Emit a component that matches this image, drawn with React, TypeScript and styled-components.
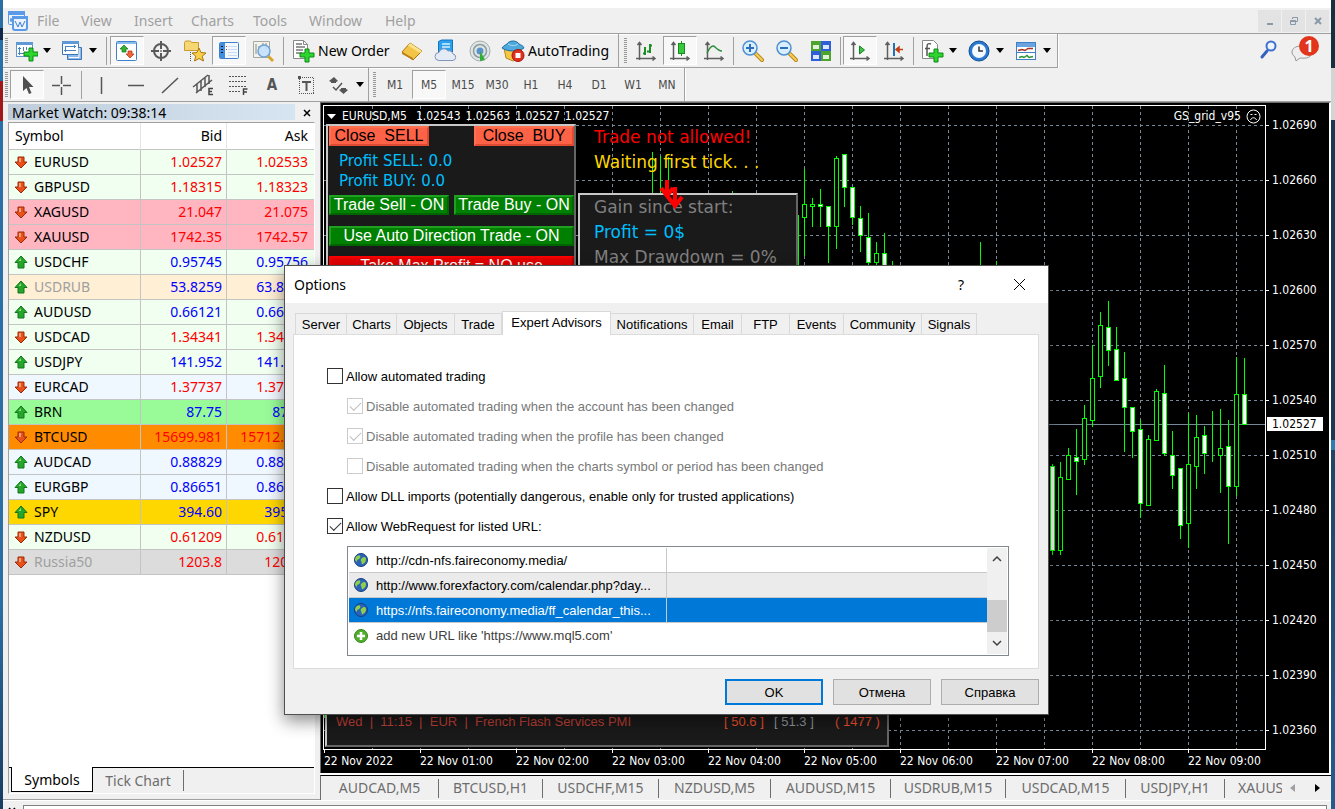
import React from "react";
import styled, { createGlobalStyle, css } from "styled-components";

const ui = `"Noto Sans", "Open Sans", sans-serif`;
const dlg = `"Liberation Sans", Arial, sans-serif`;
const tahoma = `"DejaVu Sans Condensed", "DejaVu Sans", sans-serif`;
const verdana = `"DejaVu Sans", sans-serif`;

const Global = createGlobalStyle`
  * { box-sizing: border-box; }
  body { margin: 0; background: #f0f0f0; font-family: ${ui}; font-size: 14px; color: #000; }
  button { font: inherit; color: inherit; background: none; border: 0; padding: 0; margin: 0; cursor: default; }
  svg { display: block; flex: none; }
`;

/* ---------- window shell ---------- */
const Desktop = styled.div`
  position: relative;
  display: flex;
  height: 100vh;
  min-height: 640px;
  overflow: hidden;
  padding: 0 4px 0 3px;
  background:
    linear-gradient(#16303f 0 68px, #d4d4d4 68px 120px, #1a3a50 120px 440px, #2a7fae 440px 450px, #1d4664 450px, #245c8e) right / 4px 100% no-repeat,
    linear-gradient(#2b6ea3 0 28px, #10294a 28px 40px, #2a70a8 40px 81px, #a01818 81px 121px, #2a70a8 121px, #2b6ea3 75%, #1a3c60);
`;
const Frame = styled.div`
  flex: 1;
  min-width: 0;
  display: flex;
  flex-direction: column;
  background: #f0f0f0;
  border-top: 8px solid #fff;
`;
const MenuBar = styled.nav`
  display: flex;
  align-items: center;
  height: 26px;
  padding: 0 2px 0 4px;
  border-bottom: 1px solid #a0a0a0;
`;
const MenuItem = styled.button<{ $w: number }>`
  width: ${(p) => p.$w}px;
  text-align: left;
  color: #a0a0a0;
  line-height: 24px;
`;
const Spacer = styled.div`flex: 1;`;
const WinBtn = styled.button`
  width: 23px;
  height: 22px;
  margin-left: 1px;
  display: flex;
  align-items: center;
  justify-content: center;
  background: #e3e3e3;
`;
const BarRow = styled.div<{ $h: number }>`
  display: flex;
  height: ${(p) => p.$h}px;
  align-items: stretch;
`;
const Bar = styled.div<{ $line?: boolean }>`
  display: flex;
  align-items: center;
  border-right: 1px solid #a0a0a0;
  border-bottom: ${(p) => (p.$line ? "1px solid #a0a0a0" : "0")};
  box-shadow: inset 0 1px #fff, 1px 0 #fff;
`;
const Grip = styled.div`
  width: 7px;
  height: 26px;
  padding: 0 2px;
  background: repeating-linear-gradient(#989898 0 1px, #f0f0f0 1px 2px) content-box;
`;
const Tool = styled.button<{ $on?: boolean; $w?: number; $drop?: boolean }>`
  width: ${(p) => p.$w ?? 34}px;
  height: 29px;
  display: flex;
  align-items: center;
  justify-content: ${(p) => (p.$w ? "flex-start" : "center")};
  gap: ${(p) => (p.$drop ? 5 : 3)}px;
  padding-left: ${(p) => (p.$w ? 4 : 0)}px;
  white-space: nowrap;
  ${(p) =>
    p.$on &&
    css`
      background: #f8f8f8;
      border: 1px solid #fff;
      border-top-color: #a0a0a0;
      border-left-color: #a0a0a0;
    `}
`;
const Period = styled(Tool)`
  font-family: ${tahoma};
  font-size: 12px;
  color: #4a4a4a;
`;
const Sep = styled.div<{ $w?: number; $full?: boolean }>`
  width: ${(p) => p.$w ?? 7}px;
  height: ${(p) => (p.$full ? 34 : 28)}px;
  background: linear-gradient(#a0a0a0, #a0a0a0) center / 1px 100% no-repeat;
`;
const Main = styled.div`
  flex: 1;
  min-height: 0;
  display: flex;
  border-top: 1px solid #a0a0a0;
`;

/* ---------- market watch ---------- */
const Watch = styled.aside`
  width: 317px;
  flex: none;
  display: flex;
  flex-direction: column;
  padding: 2px 5px 5px 5px;
  border-bottom: 1px solid #a0a0a0;
`;
const WatchHead = styled.header`
  display: flex;
  height: 18px;
  line-height: 17px;
  justify-content: space-between;
`;
const WatchTitle = styled.h2`
  margin: 0 0 2px;
  padding-left: 4px;
  width: 287px;
  font-size: 14px;
  font-weight: 400;
  background: linear-gradient(90deg, #bfcddb, #d7e4f2);
`;
const CloseBtn = styled.button`
  width: 17px;
  display: flex;
  align-items: center;
  justify-content: center;
`;
const WatchBody = styled.div`
  flex: 1;
  min-height: 0;
  overflow: hidden;
  background: #fff;
  border: 1px solid #a0a0a0;
  border-right-color: #fff;
  border-bottom: 0;
`;
const Quotes = styled.table`
  width: 100%;
  table-layout: fixed;
  border-collapse: separate;
  border-spacing: 0;
  th, td {
    height: 25px;
    padding: 0 4px;
    font-weight: 400;
    text-align: right;
    line-height: 24px;
    border-bottom: 1px solid #c4c4c4;
    border-right: 1px solid #c4c4c4;
  }
  th { height: 27px; line-height: 26px; border-right-color: #e5e5e5; }
  th:first-child { text-align: left; padding-left: 6px; }
  th:last-child, td:last-child { border-right: 0; padding-right: 6px; }
`;
const QuoteRow = styled.tr<{ $bg: string; $c: string; $dim?: boolean }>`
  background: ${(p) => p.$bg};
  color: ${(p) => p.$c};
  td:first-child { color: ${(p) => (p.$dim ? "#a0a0a0" : "#000")}; }
`;
const Sym = styled.span`
  display: flex;
  align-items: center;
  gap: 5px;
`;
const WatchTabs = styled.div`
  display: flex;
  height: 27px;
  align-items: flex-start;
  border-left: 1px solid #a0a0a0;
  border-right: 1px solid #fff;
  border-bottom: 1px solid #fff;
  padding-left: 2px;
  box-shadow: inset 0 1px #000;
`;
const WatchTab = styled.button<{ $on?: boolean }>`
  height: ${(p) => (p.$on ? 25 : 21)}px;
  width: ${(p) => (p.$on ? 82 : 91)}px;
  margin-top: ${(p) => (p.$on ? 0 : 3)}px;
  color: ${(p) => (p.$on ? "#000" : "#6d6d6d")};
  background: ${(p) => (p.$on ? "#fff" : "none")};
  border: solid ${(p) => (p.$on ? "#000" : "#6d6d6d")};
  border-width: ${(p) => (p.$on ? "0 1px 1px 1px" : "0 1px 0 0")};
`;

/* ---------- chart ---------- */
const ChartSide = styled.section`
  flex: 1;
  min-width: 0;
  display: flex;
  flex-direction: column;
`;
const ChartWin = styled.div`
  flex: 1;
  min-height: 0;
  display: grid;
  grid-template-columns: minmax(0, 1fr) 63px;
  grid-template-rows: minmax(0, 1fr) 23px;
  padding: 2px 0 0 2px;
  border: 1px solid #6d6d6d;
  border-right: 2px solid #fff;
  border-bottom: 0;
  background: #000;
  color: #fff;
  font-family: ${tahoma};
  font-size: 12px;
`;
const Plot = styled.div`
  position: relative;
  overflow: hidden;
  border: 1px solid #fff;
`;
const PlotSvg = styled.svg`
  position: absolute;
  inset: 0;
`;
const PlotTitle = styled.div`
  position: relative;
  display: flex;
  align-items: center;
  height: 20px;
  padding: 0 4px 0 3px;
  gap: 5px;
  white-space: nowrap;
`;
const SymbolName = styled.span`
  padding: 0 4px 0 1px;
`;
const PriceAxis = styled.div`
  position: relative;
  display: flex;
  flex-direction: column;
  gap: 39px;
  padding-top: 12px;
  overflow: hidden;
`;
const Price = styled.div`
  flex: none;
  display: flex;
  align-items: center;
  gap: 3px;
  line-height: 16px;
  &::before { content: ""; width: 3px; height: 1px; background: #fff; }
`;
const PriceNow = styled.div`
  position: absolute;
  top: 312px;
  left: 1px;
  width: 56px;
  line-height: 14px;
  padding-left: 5px;
  background: #fff;
  color: #000;
`;
const TimeAxis = styled.div`
  display: flex;
  overflow: hidden;
  padding-left: 1px;
`;
const Time = styled.div`
  flex: none;
  width: 96px;
  line-height: 16px;
  white-space: nowrap;
  &::before { content: ""; display: block; width: 1px; height: 3px; background: #fff; }
`;
const Panel = styled.div<{ $x: number; $w: number }>`
  position: absolute;
  left: ${(p) => p.$x}px;
  width: ${(p) => p.$w}px;
  background: #1a1a1a;
  border: 2px solid;
  border-color: #c8c8c8 #666 #666 #c8c8c8;
`;
const TradePanel = styled(Panel)`
  top: 18px;
  height: 300px;
  padding: 0 0 0 1px;
  font-family: ${dlg};
  font-size: 16px;
`;
const PanelRow = styled.div<{ $gap: number }>`
  display: flex;
  justify-content: space-between;
  margin-bottom: ${(p) => p.$gap}px;
`;
const EaButton = styled.button<{ $tone: "tomato" | "green" | "red"; $w?: number }>`
  width: ${(p) => (p.$w ? `${p.$w}px` : "100%")};
  height: 20px;
  line-height: 16px;
  white-space: pre;
  text-align: center;
  border: 2px solid;
  ${(p) =>
    ({
      tomato: css`background: #ff6347; color: #000; border-color: #ff7050 #e04a30 #e04a30 #ff7050;`,
      green: css`background: #008000; color: #fff; border-color: #20a020 #006400 #006400 #20a020;`,
      red: css`background: #e80000; color: #fff; border-color: #ff0000 #b00000 #b00000 #ff0000;`,
    })[p.$tone]}
`;
const Profits = styled.div`
  padding: 5px 0 4px 10px;
  font-family: ${verdana};
  font-size: 15px;
  line-height: 20px;
  color: #00bfff;
  height: 49px;
`;
const Status = styled.div`
  position: absolute;
  left: 270px;
  top: 19px;
  font-family: ${verdana};
  font-size: 17px;
  line-height: 25px;
`;
const GainPanel = styled(Panel)`
  top: 87px;
  height: 220px;
  padding-left: 14px;
  font-family: ${verdana};
  font-size: 17px;
  line-height: 25px;
`;
const Line = styled.div<{ $c: string }>`
  color: ${(p) => p.$c};
  white-space: pre;
`;
const NewsPanel = styled(Panel)`
  bottom: 2px;
  height: 60px;
  display: flex;
  align-items: flex-end;
  padding: 0 7px 15px 9px;
  font-family: ${dlg};
  font-size: 13px;
  line-height: 16px;
  white-space: pre;
`;
const NewsCell = styled.span<{ $c: string; $w?: number }>`
  color: ${(p) => p.$c};
  ${(p) => (p.$w ? `width: ${p.$w}px;` : "flex: 1;")}
`;
const ChartTabs = styled.div`
  display: flex;
  align-items: center;
  height: 25px;
  overflow: hidden;
  border-top: 1px solid #000;
  border-left: 1px solid #6d6d6d;
  box-shadow: 0 -2px #fff;
  margin-top: 2px;
  position: relative;
`;
const ChartTab = styled.button<{ $w: number }>`
  flex: none;
  width: ${(p) => p.$w}px;
  height: 19px;
  line-height: 18px;
  color: #6d6d6d;
  overflow: hidden;
  white-space: nowrap;
  border-right: 1px solid #6d6d6d;
  &:last-of-type { border: 0; text-align: left; padding-left: 13px; }
`;
const Pager = styled.div`
  display: flex;
  gap: 20px;
  padding-left: 8px;
`;
const Terminal = styled.footer`
  height: 9px;
  flex: none;
  padding: 4px 4px 0 5px;
  display: flex;
  gap: 7px;
  align-items: stretch;
  border-top: 1px solid #fff;
`;
const TerminalBody = styled.div`
  flex: 1;
  background: #fff;
  border: 1px solid #808080;
  border-bottom: 0;
`;

/* ---------- dialog ---------- */
const Dialog = styled.div`
  position: absolute;
  left: 284px;
  top: 265px;
  width: 765px;
  border: 1px solid #505050;
  background: #f0f0f0;
  box-shadow: 0 6px 16px rgba(0, 0, 0, 0.45);
  font-family: ${dlg};
  font-size: 13px;
`;
const DlgTitle = styled.header`
  display: flex;
  align-items: center;
  height: 37px;
  padding-left: 9px;
  background: #fff;
  font-family: ${ui};
  font-size: 14px;
  h1 { flex: 1; margin: 0; font-size: 14px; font-weight: 400; }
`;
const TitleBtn = styled.button`
  width: 58px;
  display: flex;
  justify-content: center;
`;
const DlgBody = styled.div`
  padding: 8px 9px 0 8px;
`;
const Tabs = styled.div`
  display: flex;
  align-items: flex-end;
  padding-left: 2px;
`;
const Tab = styled.button<{ $w: number; $on?: boolean }>`
  width: ${(p) => p.$w}px;
  height: ${(p) => (p.$on ? 24 : 21)}px;
  padding-bottom: ${(p) => (p.$on ? 2 : 0)}px;
  margin-bottom: ${(p) => (p.$on ? -1 : 0)}px;
  position: relative;
  background: ${(p) => (p.$on ? "#fff" : "#f0f0f0")};
  border: 1px solid #d9d9d9;
  border-bottom: 0;
  border-left-width: ${(p) => (p.$on ? 1 : 0)}px;
  &:first-child { border-left-width: 1px; }
`;
const Page = styled.div`
  height: 335px;
  padding: 26px 29px 0 33px;
  background: #fff;
  border: 1px solid #dcdcdc;
`;
const Check = styled.label<{ $sub?: boolean; $off?: boolean }>`
  display: flex;
  align-items: center;
  gap: 3px;
  height: 30px;
  padding-left: ${(p) => (p.$sub ? 20 : 0)}px;
  color: ${(p) => (p.$off ? "#787878" : "#000")};
`;
const Box = styled.input`
  appearance: none;
  width: 16px;
  height: 16px;
  margin: 0;
  display: grid;
  place-items: center;
  border: 1px solid #333;
  background: #fff;
  color: #333;
  &:disabled { border-color: #ccc; color: #bfbfbf; }
  &:checked::after {
    content: "";
    width: 10px;
    height: 5px;
    border: solid currentColor;
    border-width: 0 0 1px 1px;
    transform: translateY(-1px) rotate(-45deg);
  }
`;
const ListBox = styled.div`
  display: flex;
  height: 110px;
  margin: 5px 0 0 20px;
  padding: 1px;
  border: 1px solid #828790;
`;
const Urls = styled.table`
  flex: 1;
  width: 100%;
  align-self: flex-start;
  table-layout: fixed;
  border-collapse: separate;
  border-spacing: 0;
  td {
    height: 25px;
    padding: 0 0 0 5px;
    line-height: 23px;
    border-bottom: 1px solid #c8c8c8;
    white-space: nowrap;
  }
  td:first-child:not([colspan]) { border-right: 1px solid #c8c8c8; }
  tr:last-child td { border: 0; }
`;
const UrlRow = styled.tr<{ $bg: string; $c: string }>`
  background: ${(p) => p.$bg};
  color: ${(p) => p.$c};
`;
const Url = styled.span`
  display: flex;
  align-items: center;
  gap: 8px;
`;
const Scroll = styled.div`
  width: 20px;
  display: flex;
  flex-direction: column;
  justify-content: space-between;
  background: #f0f0f0;
`;
const ScrollBtn = styled.button`
  height: 22px;
  display: flex;
  align-items: center;
  justify-content: center;
`;
const Thumb = styled.div`
  height: 33px;
  margin-top: 30px;
  background: #cdcdcd;
`;
const Actions = styled.div`
  display: flex;
  justify-content: flex-end;
  gap: 10px;
  padding: 10px 0 9px;
`;
const Push = styled.button<{ $main?: boolean }>`
  width: 98px;
  height: 26px;
  background: #e1e1e1;
  border: ${(p) => (p.$main ? "2px solid #0078d7" : "1px solid #adadad")};
`;

/* ---------- icons ---------- */
const I = ({ children, s = 24 }: { children?: React.ReactNode; s?: number }) => (
  <svg width={s} height={s} viewBox={`0 0 ${s} ${s}`} fill="none" aria-hidden="true">{children}</svg>
);
const Plus = () => (
  <path d="M14 10h4v4h5v4h-5v5h-4v-5h-5v-4h5z" fill="#2fd52f" stroke="#0b8a12" strokeWidth="1" />
);
const Arrow = () => (
  <svg width="8" height="5" viewBox="0 0 8 5"><path d="M0 0h8L4 5z" fill="#000" /></svg>
);
const NewChartIcon = () => (
  <I><rect x="2.500" y="3.500" width="16" height="14" fill="#fff" stroke="#5f96cf" /><path d="M2 3h17v3H2z" fill="#5f9ad6" /><path d="M5.500 8v8M4 14.500h8M4 9.500h3M9.500 8v4M12.500 8v3" stroke="#4b83bd" /><g transform="translate(1 -1)"><Plus /></g></I>
);
const WindowsIcon = () => (
  <I><path d="M7.500 8.500h14v12h-14z" fill="#8fb9e6" stroke="#3b76b8" /><path d="M2.500 2.500h16v13h-16z" fill="#fff" stroke="#3b76b8" /><path d="M2 2h17v3H2z" fill="#5f9ad6" /><path d="M5.500 7v6M4 11.500h12M5 7.500h11M14.500 6v3" stroke="#4b83bd" /><path d="M9 18.500h10V9" stroke="#fff" /></I>
);
const MarketIcon = () => (
  <I><rect x="1.500" y="2.500" width="20" height="19" rx="1" fill="#fff" stroke="#3f82cc" /><path d="M2 3h19v2H2z" fill="#8cbcec" /><path d="M9 6l4 4h-2v3H7v-3H5z" fill="#35b035" stroke="#0e7a16" strokeWidth=".7" /><path d="M15 19l-4-4h2v-3h4v3h2z" fill="#f2653a" stroke="#b02c0c" strokeWidth=".7" /></I>
);
const TargetIcon = () => (
  <I><circle cx="12" cy="12" r="7" stroke="#5a5a5a" strokeWidth="2" /><path d="M12 2v8M12 14v8M2 12h8M14 12h8" stroke="#5a5a5a" strokeWidth="2" /><circle cx="12" cy="12" r="1" fill="#777" /></I>
);
const star = "M16 9l2 4.500 5 .5-3.800 3.200L20.500 22 16 19.500 11.500 22l1.300-4.800L9 14l5-.5z";
const FolderIcon = () => (
  <I><path d="M1.500 3.500l1-1.500h5l1 1.500h7v8h-14z" fill="#f7d774" stroke="#c99a2c" /><path d="M7.500 13v9" stroke="#555" strokeDasharray="1 1" /><path d={star} fill="#f9cf4b" stroke="#a8780d" /></I>
);
const DataIcon = () => (
  <I><rect x="2.500" y="3.500" width="19" height="16" rx="1" fill="#f4f9ff" stroke="#3f82cc" /><path d="M3 4h5v15H3z" fill="#3f8fe0" /><path d="M4 7.500h2M4 10.500h2M4 13.500h2" stroke="#111" /><path d="M11 7.500h9M11 10.500h9M11 13.500h9M11 16.500h9" stroke="#c9dcf2" /><path d="M9 7.500h1M9 10.500h1" stroke="#d33" /></I>
);
const TesterIcon = () => (
  <I><path d="M2.500 2.500h16v16h-16z" fill="#f3f3ee" stroke="#a8a8a0" /><path d="M5 5v10M8 7v6M15 4v6M12 4v3" stroke="#8a8a80" /><path d="M17 17l5 5" stroke="#d8a52c" strokeWidth="3" /><circle cx="13" cy="12" r="6" fill="#c4e2fb" fillOpacity=".9" stroke="#6fa3d6" strokeWidth="1.500" /></I>
);
const OrderIcon = () => (
  <I><path d="M2.500 1.500h10l4 4v14h-14z" fill="#fff" stroke="#888" /><path d="M12.500 1.500v4h4" stroke="#888" /><path d="M5 5h6M5 8h9M5 11h7M5 14h6" stroke="#777" strokeWidth="1.500" /><Plus /></I>
);
const GoldIcon = () => (
  <I><path d="M2 13l8-9 12 8-9 9z" fill="#f3c445" stroke="#a87510" /><path d="M10 4l12 8-2 2L8 6.500z" fill="#fbe38c" /><path d="M2 13l11 6v2L2 15z" fill="#b97f15" /></I>
);
const CloudIcon = () => (
  <I><path d="M4.500 2.500l3-1.500h11v12h-14z" fill="#2da0ee" stroke="#1374c0" /><path d="M8 5h8M8 8h8" stroke="#d9f0ff" strokeWidth="1.500" /><path d="M5 21.500a4 4 0 0 1 0-8 5 5 0 0 1 9-1.500 4 4 0 0 1 5 3 3.300 3.300 0 0 1 0 6.500z" fill="#e4ebf5" stroke="#7f97bb" /></I>
);
const SignalIcon = () => (
  <I><circle cx="12" cy="12" r="10" fill="#dfe5e5" stroke="#a5adad" /><circle cx="12" cy="12" r="6.500" stroke="#8b9c9c" strokeWidth="1.500" /><circle cx="12" cy="12" r="3.500" fill="#5b92c9" /><path d="M12 12v10a10 10 0 0 0 5-1.500z" fill="#2fae35" /></I>
);
const AutoIcon = () => (
  <I><path d="M3 9h18l-2 10-7 3-7-3z" fill="#f5c744" stroke="#b6861a" /><path d="M1 9c2-3 4-3 5-4 2-4 10-4 12 0 1 1 4 1 5 4-6 4-16 4-22 0z" fill="#4fa9dd" stroke="#1f6fa3" /><path d="M7 5c3 2 8 2 10 0" stroke="#a9dcf7" /><circle cx="17" cy="16.500" r="6" fill="#e03020" stroke="#a51208" /><path d="M14.500 14h5v5h-5z" fill="#fff" /></I>
);
const Axes = () => <path d="M5.500 4v17M2 19.500h19M3.500 6l2-2.500 2 2.500M18.500 17.500l2.500 2-2.500 2" stroke="#5e5e5e" strokeWidth="1.500" />;
const BarsIcon = () => (<I><Axes /><path d="M11 8v8M9 14.500h2M16 5v9M16 6.500h2M13 12.500h3" stroke="#1b8f24" strokeWidth="2" /></I>);
const CandlesIcon = () => (<I><Axes /><path d="M13.500 2v15" stroke="#1b8f24" /><rect x="10.500" y="4.500" width="6" height="10" fill="#35c93c" stroke="#178a20" /></I>);
const LineIcon = () => (<I><Axes /><path d="M5 14c3-7 6-8 8-6 3 3 5 4 7 4" stroke="#2a8f38" strokeWidth="1.500" /></I>);
const ZoomIcon = ({ plus }: { plus?: boolean }) => (
  <I><path d="M15 15l6 6" stroke="#b98a1c" strokeWidth="4" strokeLinecap="round" /><path d="M15 15l6 6" stroke="#f5cf57" strokeWidth="2" strokeLinecap="round" /><circle cx="9" cy="9" r="7" fill="#d8eefc" stroke="#4d8fd2" strokeWidth="1.500" /><path d={plus ? "M5 9h8M9 5v8" : "M5 9h8"} stroke="#2d6fb8" strokeWidth="2" /></I>
);
const TileIcon = () => (
  <I>{([[2, 2, "#4fa52c", "#e2f2da"], [12, 2, "#2f5fd6", "#dbe6fb"], [2, 12, "#2f5fd6", "#dbe6fb"], [12, 12, "#4fa52c", "#e2f2da"]] as [number, number, string, string][]).map(([x, y, c, f]) => (
    <g key={`${x}-${y}`}><rect x={x} y={y} width="10" height="10" fill={c} /><rect x={x + 2} y={y + 4} width="6" height="4" fill={f} /></g>))}</I>
);
const ScrollIcon = () => (<I><Axes /><path d="M11.500 7l5 4-5 4z" fill="#3fc545" stroke="#15801e" /></I>);
const ShiftIcon = () => (<I><Axes /><path d="M12 4v13" stroke="#2470b8" strokeWidth="2" /><path d="M21 10.500h-4M17 8l-3 2.500 3 2.500z" stroke="#c33c12" strokeWidth="1.500" fill="#c33c12" /></I>);
const IndicatorIcon = () => (
  <I><path d="M2.500 1.500h11l4 4v14h-15z" fill="#fff" stroke="#888" /><path d="M11 5c-3-1-4 0-4 3v9M5 9.500h5" stroke="#555" strokeWidth="1.500" /><Plus /></I>
);
const ClockIcon = () => (
  <I><circle cx="12" cy="12" r="10" fill="#2a78cf" stroke="#0f4e96" /><circle cx="12" cy="12" r="7" fill="#f4faff" /><path d="M12 7.500V12h4" stroke="#333" strokeWidth="1.500" /></I>
);
const TemplateIcon = () => (
  <I><rect x="2.500" y="3.500" width="19" height="17" fill="#fff" stroke="#3f7fc4" /><path d="M3 4h18v4H3z" fill="#6aa4e0" /><path d="M3 13.500h18" stroke="#3f7fc4" /><path d="M4 11.500l4-1 3 1 3-2h5" stroke="#a33020" strokeWidth="1.500" /><path d="M5 18.500l3-1 2 1 3-2 2 2 4-1" stroke="#2c9138" strokeWidth="1.500" /></I>
);
const CursorIcon = () => (<I><path d="M8 3v15l3.500-3 2.500 6 2.500-1-2.500-6h4.500z" fill="#4f4f4f" /></I>);
const CrossIcon = () => (<I><path d="M12.500 3v8M12.500 14v8M3 12.500h8M14 12.500h8" stroke="#555" strokeWidth="1.500" /></I>);
const VIcon = () => (<I><path d="M11.500 4v17" stroke="#555" strokeWidth="1.500" /></I>);
const HIcon = () => (<I><path d="M4 12.500h16" stroke="#555" strokeWidth="1.500" /></I>);
const TrendIcon = () => (<I><path d="M4 20L20 5" stroke="#555" strokeWidth="1.500" /></I>);
const ChannelIcon = () => (
  <I><path d="M1 14L16 2M4 20L20 7M5 11v8M9 8v10M13 5v9M17 2v9" stroke="#555" strokeWidth="1.500" /><path d="M21 15.500h-4v6h4M17 18.500h3" stroke="#444" strokeWidth="1.500" /></I>
);
const FiboIcon = () => (
  <I><path d="M3 3.500h18M3 8.500h18M3 13.500h18M3 18.500h11" stroke="#555" strokeDasharray="2 1" /><path d="M17.500 22v-6h4M17 19h4" stroke="#444" strokeWidth="1.500" /></I>
);
const LetterA = styled.span`
  font: 700 15px/24px ${tahoma};
  color: #555;
`;
const LabelIcon = () => (
  <I><rect x="5.500" y="4.500" width="14" height="16" stroke="#555" strokeDasharray="1 1" shapeRendering="crispEdges" /><path d="M4 3h3v3H4z" fill="#555" /><path d="M8 9h9M12.500 8v10" stroke="#555" strokeWidth="2" /></I>
);
const ShapesIcon = () => (<I><path d="M2 8l5-4 4 4-2 1v1H4V9zM12 17l2-1v-1h5v1l2 1-4.500 4z" fill="#555" /><path d="M6 14l3 3 6-7" stroke="#555" strokeWidth="1.500" /></I>);
const Quote = ({ up }: { up?: boolean }) => (
  <svg width="16" height="16" viewBox="0 0 16 16">
    {up ? (
      <><path d="M8 2l6 6.500h-3V14H5V8.500H2z" fill="#25a62a" stroke="#12751b" /><path d="M8 4L5.500 7H8z" fill="#8fe07c" /></>
    ) : (
      <><path d="M8 14L2 8h3V3h6v5h3z" fill="#e8501c" stroke="#9c2a08" /><path d="M6 4h2v4H6z" fill="#ff9e70" /></>
    )}
  </svg>
);
const Globe = () => (
  <svg width="14" height="14" viewBox="0 0 14 14"><circle cx="7" cy="7" r="6.500" fill="#2a63b8" stroke="#173f80" /><path d="M3 3c3-2 4 0 3 2s-3 1-3 3-2-1-2-1 0-3 2-4zM8 5c2-2 4-1 4 1s-1 4-3 5-1-2-2-3 0-2 1-3z" fill="#8ed04a" /></svg>
);
const AddUrl = () => (
  <svg width="14" height="14" viewBox="0 0 14 14"><circle cx="7" cy="7" r="6.500" fill="#4fae2c" stroke="#37861c" /><path d="M7 3v8M3 7h8" stroke="#fff" strokeWidth="2.500" /></svg>
);

/* ---------- data ---------- */
const menu: [string, number][] = [["File", 44], ["View", 53], ["Insert", 57], ["Charts", 62], ["Tools", 56], ["Window", 76], ["Help", 50]];
const periods = ["M1", "M5", "M15", "M30", "H1", "H4", "D1", "W1", "MN"];
const ohlc = ["1.02543", "1.02563", "1.02527", "1.02527"];
const R = "#ff0000", B = "#0000ff";
const honey = "#f0fff0", alice = "#f0f8ff", pink = "#ffb6c1";
const quotes: [string, string, string, boolean, string, string][] = [
  ["EURUSD", "1.02527", "1.02533", false, honey, R],
  ["GBPUSD", "1.18315", "1.18323", false, honey, R],
  ["XAGUSD", "21.047", "21.075", false, pink, R],
  ["XAUUSD", "1742.35", "1742.57", false, pink, R],
  ["USDCHF", "0.95745", "0.95756", true, honey, B],
  ["USDRUB", "53.8259", "63.8259", true, "#ffefd5", B],
  ["AUDUSD", "0.66121", "0.66131", true, honey, B],
  ["USDCAD", "1.34341", "1.34356", false, honey, R],
  ["USDJPY", "141.952", "141.962", true, honey, B],
  ["EURCAD", "1.37737", "1.37760", false, alice, R],
  ["BRN", "87.75", "87.80", true, "#98fb98", B],
  ["BTCUSD", "15699.981", "15712.981", false, "#ff8c00", R],
  ["AUDCAD", "0.88829", "0.88850", true, alice, B],
  ["EURGBP", "0.86651", "0.86663", true, alice, B],
  ["SPY", "394.60", "395.62", true, "#ffd700", B],
  ["NZDUSD", "0.61209", "0.61227", false, honey, R],
  ["Russia50", "1203.8", "1208.8", false, "#dcdcdc", R],
];
// x, high, low, body top, body bottom, bearish
const candles: [number, number, number, number?, number?, boolean?][] = [
  [652, 152, 193], [660, 156, 193], [668, 157, 193], [732, 191, 193], [798, 215, 270],
  [804, 169, 256, 204, 218], [812, 198, 227, 204, 207], [820, 189, 227, 204, 207, true],
  [828, 206, 263, 206, 227, true], [836, 156, 249, 158, 227], [844, 154, 207, 154, 188, true],
  [852, 187, 225, 187, 218, true], [860, 206, 252, 218, 236, true], [868, 213, 270, 237, 263, true],
  [876, 242, 270, 253, 263], [884, 233, 270, 253, 270, true], [892, 261, 270], [980, 242, 270], [996, 261, 270],
  [1052, 464, 555, 466, 551, true], [1060, 462, 555, 477, 551], [1068, 448, 480, 455, 480],
  [1076, 429, 495, 457, 462, true], [1084, 405, 465, 418, 460], [1092, 345, 427, 378, 421],
  [1100, 312, 388, 325, 377], [1108, 301, 366, 327, 351, true], [1116, 327, 381, 349, 381, true],
  [1124, 352, 452, 378, 408, true], [1132, 407, 458, 407, 432, true], [1140, 420, 518, 429, 504, true],
  [1148, 435, 506, 439, 506], [1156, 389, 441, 391, 441], [1164, 365, 456, 393, 454, true],
  [1172, 431, 489, 455, 476, true], [1180, 468, 539, 468, 526, true], [1188, 413, 548, 464, 524],
  [1196, 415, 489, 437, 467], [1204, 426, 474, 435, 454, true], [1212, 411, 462, 455, 456],
  [1220, 409, 493, 448, 456], [1228, 420, 544, 446, 487, true], [1236, 357, 496, 394, 487],
  [1244, 358, 425, 394, 425, true],
];
const prices = ["1.02690", "1.02660", "1.02630", "1.02600", "1.02570", "1.02540", "1.02510", "1.02480", "1.02450", "1.02420", "1.02390", "1.02360"];
const times = ["2022", "01:00", "02:00", "03:00", "04:00", "05:00", "06:00", "07:00", "08:00", "09:00"];
const chartTabs: [string, number][] = [["AUDCAD,M5", 118], ["BTCUSD,H1", 104], ["USDCHF,M15", 116], ["NZDUSD,M5", 112], ["AUDUSD,M15", 120], ["USDRUB,M15", 115], ["USDCAD,M15", 120], ["USDJPY,H1", 99], ["XAUUSD,M5", 57]];
const tabs: [string, number][] = [["Server", 52], ["Charts", 50], ["Objects", 58], ["Trade", 47], ["Expert Advisors", 109], ["Notifications", 83], ["Email", 48], ["FTP", 48], ["Events", 54], ["Community", 78], ["Signals", 55]];
const checks: { text: string; sub?: boolean; on?: boolean }[] = [
  { text: "Allow automated trading" },
  { text: "Disable automated trading when the account has been changed", sub: true, on: true },
  { text: "Disable automated trading when the profile has been changed", sub: true, on: true },
  { text: "Disable automated trading when the charts symbol or period has been changed", sub: true },
  { text: "Allow DLL imports (potentially dangerous, enable only for trusted applications)" },
  { text: "Allow WebRequest for listed URL:", on: true },
];
const urls: [string, string, string][] = [
  ["http://cdn-nfs.faireconomy.media/", "#fff", "#000"],
  ["http://www.forexfactory.com/calendar.php?day...", "#ebebeb", "#000"],
  ["https://nfs.faireconomy.media/ff_calendar_this...", "#0078d7", "#fff"],
];

const Candles = () => (
  <PlotSvg width="100%" height="100%" shapeRendering="crispEdges">
    {Array.from({ length: 30 }, (_, i) => (
      <line key={i} x1={48.5 + i * 48} x2={48.5 + i * 48} y1="0" y2="100%" stroke="#778899" strokeDasharray="3 3" />
    ))}
    {prices.map((p, i) => (
      <line key={p} x1="0" x2="100%" y1={19.5 + i * 55} y2={19.5 + i * 55} stroke="#778899" strokeDasharray="3 3" />
    ))}
    <line x1="0" x2="100%" y1="318.5" y2="318.5" stroke="#778899" />
    <g transform="translate(-324 -106)" stroke="#00ff00">
      {candles.map(([x, hi, lo, t, b, bear]) => (
        <g key={x}>
          <line x1={x + 0.5} x2={x + 0.5} y1={hi} y2={lo} />
          {t && b && <rect x={x - 1.5} y={t + 0.5} width="4" height={Math.max(b - t - 1, 0)} fill={bear ? "#fff" : "#000"} />}
        </g>
      ))}
    </g>
    <path d="M0.500 600v12" stroke="#00ff00" />
  </PlotSvg>
);
const SellMarks = () => (
  <PlotSvg width="100%" height="100%">
    <path d="M343 74v14M337 82l6 8 6-8M351 81v16M344 91l7 9 7-9" stroke="#ff0000" strokeWidth="4" fill="none" />
  </PlotSvg>
);

export default function App() {
  return (
    <Desktop>
      <Global />
      <Frame>
        <MenuBar>
          <svg width="30" height="22" viewBox="0 0 30 22">
            <rect x="1.500" y="1.500" width="16" height="13" rx="1" fill="#eaf3ff" stroke="#5b9ae6" />
            <path d="M1 1h17v4H1z" fill="#5b9ae6" />
            <path d="M4 8v4M6.500 9v3M3 10h4" stroke="#3f7fd0" fill="none" />
            <rect x="6" y="7" width="14" height="13" rx="2" fill="#eaf3ff" stroke="#5b9ae6" strokeWidth="2" />
            <path d="M5 6h16v3H5z" fill="#5b9ae6" />
            <path d="M8 11l3 6 2-5 2 5 3-6" stroke="#3f7fd0" fill="none" />
          </svg>
          {menu.map(([m, w]) => <MenuItem key={m} $w={w}>{m}</MenuItem>)}
          <Spacer />
          <WinBtn aria-label="Minimize"><I s={12}><path d="M3 9h6" stroke="#8a98a8" strokeWidth="2" /></I></WinBtn>
          <WinBtn aria-label="Restore"><I s={12}><path d="M4.500 4V2.500h5v4H8M2.500 5.500h5v4h-5zM2 6.500h6" stroke="#8a98a8" /></I></WinBtn>
          <WinBtn aria-label="Close"><I s={12}><path d="M3 3l6 6M9 3l-6 6" stroke="#8a98a8" strokeWidth="2" /></I></WinBtn>
        </MenuBar>
        <BarRow $h={34}>
          <Bar $line>
            <Grip />
            <Tool $drop $w={46} aria-label="New chart"><NewChartIcon /><Arrow /></Tool>
            <Tool $drop $w={47} aria-label="Profiles"><WindowsIcon /><Arrow /></Tool>
            <Sep />
            <Tool $on aria-label="Market Watch"><MarketIcon /></Tool>
            <Tool aria-label="Data Window"><TargetIcon /></Tool>
            <Tool aria-label="Navigator"><FolderIcon /></Tool>
            <Tool $on aria-label="Terminal"><DataIcon /></Tool>
            <Tool aria-label="Strategy Tester"><TesterIcon /></Tool>
            <Sep />
            <Tool $w={108}><OrderIcon />New Order</Tool>
            <Tool aria-label="MetaEditor"><GoldIcon /></Tool>
            <Tool aria-label="Virtual hosting"><CloudIcon /></Tool>
            <Tool aria-label="Signals"><SignalIcon /></Tool>
            <Tool $w={118}><AutoIcon />AutoTrading</Tool>
            <Sep $full />
            <Grip />
            <Tool aria-label="Bar Chart"><BarsIcon /></Tool>
            <Tool $on aria-label="Candlesticks"><CandlesIcon /></Tool>
            <Tool aria-label="Line Chart"><LineIcon /></Tool>
            <Sep $w={5} />
            <Tool aria-label="Zoom In"><ZoomIcon plus /></Tool>
            <Tool aria-label="Zoom Out"><ZoomIcon /></Tool>
            <Tool aria-label="Tile Windows"><TileIcon /></Tool>
            <Sep $w={5} />
            <Tool $on aria-label="Auto Scroll"><ScrollIcon /></Tool>
            <Tool aria-label="Chart Shift"><ShiftIcon /></Tool>
            <Sep $w={5} />
            <Tool $drop $w={47} aria-label="Indicators"><IndicatorIcon /><Arrow /></Tool>
            <Tool $drop $w={47} aria-label="Periods"><ClockIcon /><Arrow /></Tool>
            <Tool $drop $w={47} aria-label="Templates"><TemplateIcon /><Arrow /></Tool>
          </Bar>
          <Spacer />
          <Tool aria-label="Search">
            <I><path d="M4 20l5-6" stroke="#3560c0" strokeWidth="3" strokeLinecap="round" /><circle cx="13" cy="9" r="4.500" fill="#eef5ff" stroke="#3f6fd0" strokeWidth="2" /></I>
          </Tool>
          <Tool $w={44} aria-label="Messages, 1 new">
            <svg width="30" height="28" viewBox="0 0 30 28">
              <path d="M10 11c-6 0-9 3-9 6s2 4 3 5l1 4 4-3c7 1 12-1 12-6z" fill="#eee" stroke="#999" />
              <circle cx="18" cy="11" r="10" fill="#e2361c" />
              <text x="18" y="17" textAnchor="middle" fill="#fff" fontFamily="Noto Sans, sans-serif" fontWeight="700" fontSize="16">1</text>
            </svg>
          </Tool>
        </BarRow>
        <BarRow $h={33}>
          <Bar>
            <Grip />
            <Tool $on aria-label="Cursor"><CursorIcon /></Tool>
            <Tool aria-label="Crosshair"><CrossIcon /></Tool>
            <Sep />
            <Tool aria-label="Vertical line"><VIcon /></Tool>
            <Tool aria-label="Horizontal line"><HIcon /></Tool>
            <Tool aria-label="Trendline"><TrendIcon /></Tool>
            <Tool aria-label="Equidistant channel"><ChannelIcon /></Tool>
            <Tool aria-label="Fibonacci"><FiboIcon /></Tool>
            <Tool><LetterA>A</LetterA></Tool>
            <Tool aria-label="Text label"><LabelIcon /></Tool>
            <Tool $drop $w={43} aria-label="Arrows"><ShapesIcon /><Arrow /></Tool>
            <Sep $w={5} $full />
            <Grip />
            {periods.map((p) => <Period key={p} $on={p === "M5"}>{p}</Period>)}
          </Bar>
        </BarRow>
        <Main>
          <Watch>
            <WatchHead>
              <WatchTitle>Market Watch: 09:38:14</WatchTitle>
              <CloseBtn aria-label="Close"><I s={8}><path d="M1 1l6 6M7 1L1 7" stroke="#000" strokeWidth="1.500" /></I></CloseBtn>
            </WatchHead>
            <WatchBody>
              <Quotes>
                <colgroup><col style={{ width: 132 }} /><col style={{ width: 86 }} /><col /></colgroup>
                <thead><tr><th>Symbol</th><th>Bid</th><th>Ask</th></tr></thead>
                <tbody>
                  {quotes.map(([s, bid, ask, up, bg, c]) => (
                    <QuoteRow key={s} $bg={bg} $c={c} $dim={s === "USDRUB" || s === "Russia50"}>
                      <td><Sym><Quote up={up} />{s}</Sym></td><td>{bid}</td><td>{ask}</td>
                    </QuoteRow>
                  ))}
                </tbody>
              </Quotes>
            </WatchBody>
            <WatchTabs>
              <WatchTab $on>Symbols</WatchTab>
              <WatchTab>Tick Chart</WatchTab>
            </WatchTabs>
          </Watch>
          <ChartSide>
            <ChartWin>
              <Plot>
                <Candles />
                <PlotTitle>
                  <svg width="9" height="5" viewBox="0 0 9 5"><path d="M0 0h9L4.500 5z" fill="#fff" /></svg>
                  <SymbolName>EURUSD,M5</SymbolName>
                  {ohlc.map((v, i) => <span key={i}>{v}</span>)}
                  <Spacer />
                  <span>GS_grid_v95</span>
                  <svg width="15" height="15" viewBox="0 0 15 15"><circle cx="7.500" cy="7.500" r="6.500" fill="none" stroke="#fff" /><path d="M4.500 11c1-3 5-3 6 0M4.500 5.500h2M8.500 5.500h2" stroke="#fff" fill="none" /></svg>
                </PlotTitle>
                <TradePanel $x={2} $w={250}>
                  <PanelRow $gap={0}>
                    <EaButton $tone="tomato" $w={100}>{"Close  SELL"}</EaButton>
                    <EaButton $tone="tomato" $w={100}>{"Close  BUY"}</EaButton>
                  </PanelRow>
                  <Profits><div>Profit SELL: 0.0</div><div>Profit BUY: 0.0</div></Profits>
                  <PanelRow $gap={11}>
                    <EaButton $tone="green" $w={120}>Trade Sell - ON</EaButton>
                    <EaButton $tone="green" $w={120}>Trade Buy - ON</EaButton>
                  </PanelRow>
                  <PanelRow $gap={10}><EaButton $tone="green">Use Auto Direction Trade - ON</EaButton></PanelRow>
                  <PanelRow $gap={10}><EaButton $tone="red">Take Max Profit = NO use</EaButton></PanelRow>
                </TradePanel>
                <GainPanel $x={254} $w={220}>
                  <Line $c="#808080">Gain since start:</Line>
                  <Line $c="#00bfff">Profit = 0$</Line>
                  <Line $c="#808080">Max Drawdown = 0%</Line>
                </GainPanel>
                <Status>
                  <Line $c="#ff0000">Trade not allowed!</Line>
                  <Line $c="#ffd700">Waiting first tick. . .</Line>
                </Status>
                <SellMarks />
                <NewsPanel $x={1} $w={564}>
                  <NewsCell $c="#c04038">{"Wed  |  11:15  |  EUR  |  French Flash Services PMI"}</NewsCell>
                  <NewsCell $c="#f05030" $w={50}>[ 50.6 ]</NewsCell>
                  <NewsCell $c="#9098a0" $w={61}>[ 51.3 ]</NewsCell>
                  <NewsCell $c="#f05030" $w={45}>( 1477 )</NewsCell>
                </NewsPanel>
              </Plot>
              <PriceAxis>
                {prices.map((p) => <Price key={p}>{p}</Price>)}
                <PriceNow>1.02527</PriceNow>
              </PriceAxis>
              <TimeAxis>{times.map((t) => <Time key={t}>22 Nov {t}</Time>)}</TimeAxis>
            </ChartWin>
            <ChartTabs>
              {chartTabs.map(([t, w]) => <ChartTab key={t} $w={w}>{t}</ChartTab>)}
              <Pager>
                <svg width="5" height="8" viewBox="0 0 5 8"><path d="M5 0v8L0 4z" fill="#a0a0a0" /></svg>
                <svg width="5" height="8" viewBox="0 0 5 8"><path d="M0 0v8l5-4z" fill="#000" /></svg>
              </Pager>
            </ChartTabs>
          </ChartSide>
        </Main>
        <Terminal>
          <I s={8}><path d="M1 3l6 6M7 3L1 9" stroke="#000" strokeWidth="1.500" /></I>
          <TerminalBody />
        </Terminal>
      </Frame>

      <Dialog role="dialog" aria-labelledby="options-title">
        <DlgTitle>
          <h1 id="options-title">Options</h1>
          <TitleBtn>?</TitleBtn>
          <TitleBtn aria-label="Close"><I s={13}><path d="M1 1l11 11M12 1L1 12" stroke="#000" /></I></TitleBtn>
        </DlgTitle>
        <DlgBody>
          <Tabs role="tablist">
            {tabs.map(([t, w]) => (
              <Tab key={t} role="tab" $w={w} $on={t === "Expert Advisors"} aria-selected={t === "Expert Advisors"}>{t}</Tab>
            ))}
          </Tabs>
          <Page>
            {checks.map((c) => (
              <Check key={c.text} $sub={c.sub} $off={c.sub}>
                <Box type="checkbox" defaultChecked={c.on} disabled={c.sub} />
                {c.text}
              </Check>
            ))}
            <ListBox>
              <Urls>
                <colgroup><col style={{ width: 318 }} /><col /></colgroup>
                <tbody>
                  {urls.map(([u, bg, c]) => (
                    <UrlRow key={u} $bg={bg} $c={c}><td><Url><Globe />{u}</Url></td><td /></UrlRow>
                  ))}
                  <UrlRow $bg="#fff" $c="#404040"><td colSpan={2}><Url><AddUrl />add new URL like 'https://www.mql5.com'</Url></td></UrlRow>
                </tbody>
              </Urls>
              <Scroll>
                <ScrollBtn aria-label="Scroll up"><I s={10}><path d="M1 7l4-4 4 4" stroke="#404040" strokeWidth="1.500" /></I></ScrollBtn>
                <Thumb />
                <ScrollBtn aria-label="Scroll down"><I s={10}><path d="M1 3l4 4 4-4" stroke="#404040" strokeWidth="1.500" /></I></ScrollBtn>
              </Scroll>
            </ListBox>
          </Page>
          <Actions>
            <Push $main>OK</Push>
            <Push>Отмена</Push>
            <Push>Справка</Push>
          </Actions>
        </DlgBody>
      </Dialog>
    </Desktop>
  );
}
